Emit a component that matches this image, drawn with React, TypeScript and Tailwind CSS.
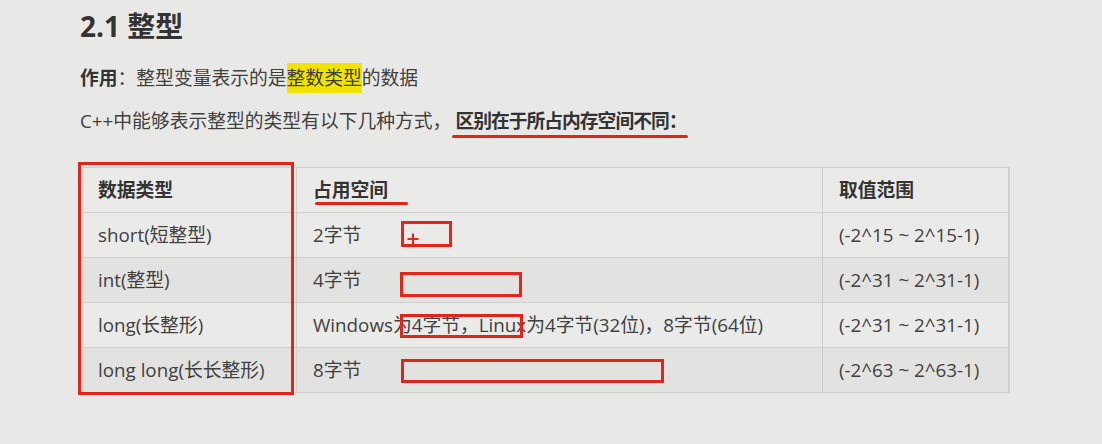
import React from 'react';

const rows = [
  { type: 'short(短整型)', size: '2字节', range: '(-2^15 ~ 2^15-1)' },
  { type: 'int(整型)', size: '4字节', range: '(-2^31 ~ 2^31-1)' },
  { type: 'long(长整形)', size: 'Windows为4字节，Linux为4字节(32位)，8字节(64位)', range: '(-2^31 ~ 2^31-1)' },
  { type: 'long long(长长整形)', size: '8字节', range: '(-2^63 ~ 2^63-1)' },
];

const App: React.FC = () => {
  return (
    <div
      className="w-[1102px] h-[444px] bg-[#e8e9e7] text-[#404040] pl-[80px] pt-[8px] overflow-hidden"
      style={{ fontFamily: '"Open Sans", "Noto Sans CJK SC", sans-serif' }}
    >
      <h2 className="text-[28px] leading-[36px] font-bold text-[#333]">2.1 整型</h2>

      <p className="mt-[20px] text-[18.8px] leading-[28px]">
        <span className="font-bold text-[#333]">作用</span>：整型变量表示的是
        <span className="bg-[#f2e400] py-[2px]">整数类型</span>的数据
      </p>

      <p className="mt-[15px] text-[18.8px] leading-[28px]">
        C++中能够表示整型的类型有以下几种方式，
        <span className="relative ml-[4px] font-bold tracking-[-1px] text-[#333]">
          区别在于所占内存空间不同：
          <span className="absolute left-[-3px] right-[-1px] top-[27px] h-[3px] rounded-full bg-[#e0261b]"></span>
        </span>
      </p>

      {/* table + annotation marks */}
      <div className="relative mt-[32px] ml-[2px] w-[928px]">
        <table className="w-full border-collapse text-[18.8px] border-r-2 border-[#cfd0ce]">
          <thead>
            <tr className="h-[45px] bg-[#eaebe9]">
              <th className="w-[214px] border border-[#cfd0ce] pl-[15px] text-left font-bold text-[#333]">数据类型</th>
              <th className="w-[526px] border border-[#cfd0ce] pl-[16px] text-left font-bold text-[#333]">占用空间</th>
              <th className="border border-[#cfd0ce] pl-[16px] text-left font-bold text-[#333]">取值范围</th>
            </tr>
          </thead>
          <tbody>
            {rows.map((r, i) => (
              <tr key={r.type} className={`h-[45px] ${i % 2 === 1 ? 'bg-[#e2e3e1]' : 'bg-[#eaebe9]'}`}>
                <td className="border border-[#cfd0ce] pl-[15px] whitespace-nowrap">{r.type}</td>
                <td className="border border-[#cfd0ce] pl-[16px] whitespace-nowrap">{r.size}</td>
                <td className="border border-[#cfd0ce] pl-[16px] whitespace-nowrap">{r.range}</td>
              </tr>
            ))}
          </tbody>
        </table>

        {/* red box around first column */}
        <div className="absolute left-[-4px] top-[-5px] w-[216px] h-[233px] border-[3px] border-[#e0261b]"></div>
        {/* underline under 占用空间 */}
        <div className="absolute left-[233px] top-[35px] w-[93px] h-[3px] rounded-full bg-[#e0261b]"></div>
        {/* boxes in the size column */}
        <div className="absolute left-[319px] top-[54px] w-[51px] h-[26px] border-[3px] border-[#e8241a]">
          <svg className="absolute left-[3px] top-[9px]" width="12" height="12" viewBox="0 0 12 12">
            <path d="M6 0.5V11.5M0.5 6H11.5" stroke="#e8241a" strokeWidth="2" fill="none" />
          </svg>
        </div>
        <div className="absolute left-[318px] top-[105px] w-[122px] h-[25px] border-[3px] border-[#e8241a]"></div>
        <div className="absolute left-[318px] top-[147px] w-[123px] h-[24px] border-[3px] border-[#e0261b]"></div>
        <div className="absolute left-[319px] top-[192px] w-[263px] h-[24px] border-[3px] border-[#e0261b]"></div>
      </div>
    </div>
  );
};

export default App;
